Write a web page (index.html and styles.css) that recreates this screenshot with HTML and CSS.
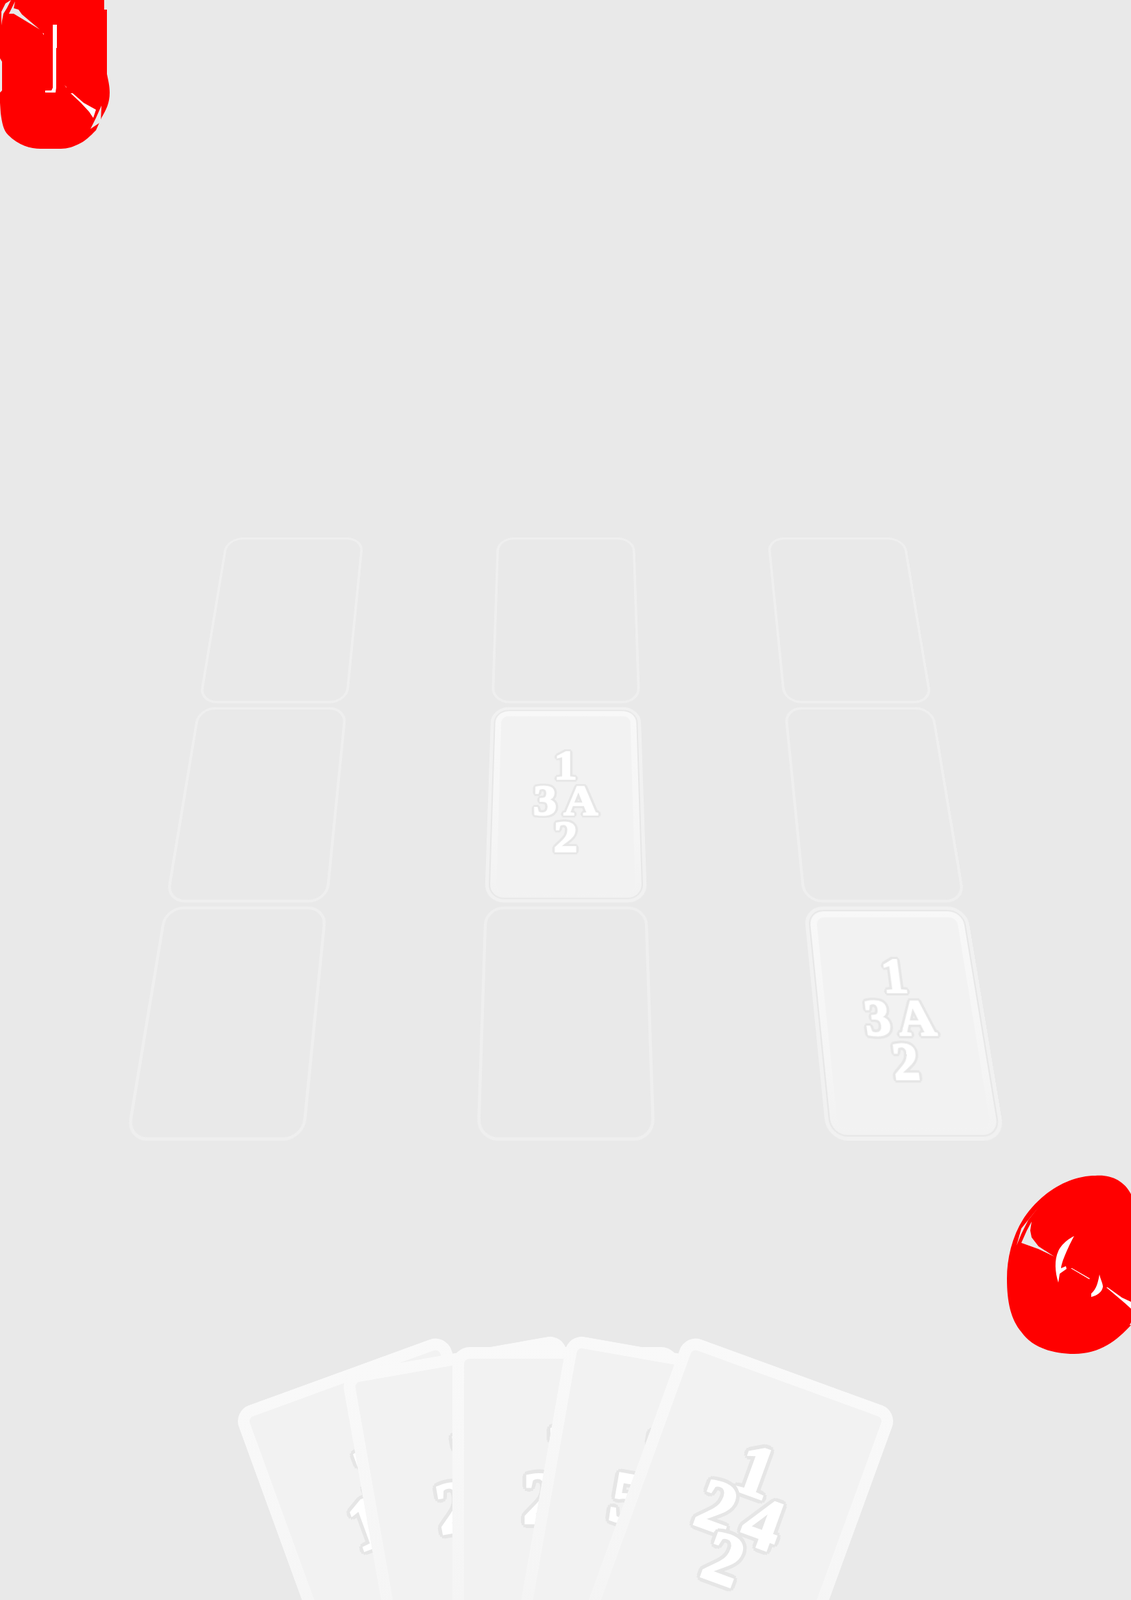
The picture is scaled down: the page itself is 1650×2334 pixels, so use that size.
FILE: index.html
```html
<!DOCTYPE html>
<html lang="en">
<head>
  <meta charset="UTF-8">
  <meta name="viewport" content="width=device-width, initial-scale=1.0">
  <title>Card Game</title>
  <link rel="stylesheet" href="styles.css">
</head>
<body>
  <div class="table">
    <!-- Player badges -->
    <svg class="badge badge-top" viewBox="0 0 160 220">
      <path class="badge-fill" d="M0 0H152V14H156V108C158 118 160 125 160 135C160 150 155 160 148 172L140 190C130 200 125 205 117 209C108 214 98 217 89 217H59C45 217 27 212 12 197C5 190 3 180 1 165L0 150V135L3 132V90L0 85Z"/>
      <path class="badge-gap" d="M2 37V17L8 5L16 0L10 12L5 20L3 30ZM13 20L22 2L20 12L27 14L32 21L58 43L30 26L20 20ZM148 154L147 178L132 188L140 172Z"/>
      <path class="badge-mark" d="M77 36H83V70H82V128L81 135H66V132H75L77 128ZM62 48L64 49L64 51ZM94 124L97 127L97 128ZM103 136H106L122 150L140 160L136 172L130 163L118 150Z"/>
    </svg>
    <svg class="badge badge-right" viewBox="1440 1690 210 300">
      <path class="badge-fill" d="M1598 1715C1620 1713 1640 1722 1650 1742V1933C1630 1955 1605 1975 1567 1975C1535 1975 1505 1965 1490 1943C1475 1925 1469 1900 1469 1865C1469 1830 1480 1790 1505 1762C1530 1733 1565 1715 1598 1715Z"/>
      <path class="badge-gap" d="M1483 1817L1490 1792L1515 1761L1500 1780L1490 1800ZM1490 1813L1498 1795L1505 1782L1503 1795L1505 1805L1515 1818L1538 1833L1515 1822ZM1648 1933L1650 1929V1933Z"/>
      <path class="badge-mark" d="M1567 1803C1555 1809 1547 1818 1544 1825C1538 1838 1539 1855 1544 1871L1546 1858L1556 1851L1555 1847L1548 1850C1549 1840 1558 1820 1567 1803ZM1604 1859C1605 1865 1609 1872 1609 1877C1608 1885 1600 1890 1592 1892V1887C1600 1880 1602 1870 1604 1859ZM1562 1850L1564 1850L1590 1865L1589 1866ZM1614 1878L1616 1878L1637 1893L1650 1899V1909L1640 1900Z"/>
    </svg>

    <!-- Board -->
    <div class="board">
      <div class="slot"></div>
      <div class="slot"></div>
      <div class="slot"></div>
      <div class="slot"></div>
      <div class="slot active">
        <div class="face">
          <div class="pips">
            <span>1</span>
            <div class="pips-row"><span>3</span><span>A</span></div>
            <span>2</span>
          </div>
        </div>
      </div>
      <div class="slot"></div>
      <div class="slot"></div>
      <div class="slot"></div>
      <div class="slot active">
        <div class="face">
          <div class="pips">
            <span>1</span>
            <div class="pips-row"><span>3</span><span>A</span></div>
            <span>2</span>
          </div>
        </div>
      </div>
    </div>

    <!-- Hand -->
    <div class="hand">
      <div class="card card-1">
        <div class="pips">
          <span>3</span>
          <div class="pips-row"><span>1</span><span>2</span></div>
          <span>4</span>
        </div>
      </div>
      <div class="card card-2">
        <div class="pips">
          <span>2</span>
          <div class="pips-row"><span>2</span><span>3</span></div>
          <span>1</span>
        </div>
      </div>
      <div class="card card-3">
        <div class="pips">
          <span>3</span>
          <div class="pips-row"><span>2</span><span>1</span></div>
          <span>2</span>
        </div>
      </div>
      <div class="card card-4">
        <div class="pips">
          <span>3</span>
          <div class="pips-row"><span>5</span><span>2</span></div>
          <span>1</span>
        </div>
      </div>
      <div class="card card-5">
        <div class="pips">
          <span>1</span>
          <div class="pips-row"><span>2</span><span>4</span></div>
          <span>2</span>
        </div>
      </div>
    </div>
  </div>
</body>
</html>
```
FILE: styles.css
```css
* {
  margin: 0;
  padding: 0;
  box-sizing: border-box;
}

body {
  background-color: #e9e9e9;
  font-family: 'Liberation Serif', serif;
  overflow: hidden;
}

.table {
  position: relative;
  width: 1650px;
  height: 2334px;
  overflow: hidden;
  padding-top: 687px;
}

/* Badges */
.badge {
  position: absolute;
  display: block;
}

.badge-top {
  top: 0;
  left: 0;
  width: 160px;
  height: 220px;
}

.badge-right {
  top: 1690px;
  left: 1440px;
  width: 210px;
  height: 300px;
}

.badge-fill {
  fill: #ff0000;
}

.badge-gap {
  fill: #e9e9e9;
}

.badge-mark {
  fill: #ffffff;
}

/* Board */
.board {
  display: grid;
  grid-template-columns: repeat(3, 227px);
  grid-template-rows: repeat(3, 316px);
  column-gap: 218.5px;
  row-gap: 6.5px;
  justify-content: center;
  transform: perspective(1625px) rotateX(25.84deg);
}

.slot {
  border: 4.5px solid #efefef;
  border-radius: 27px;
}

.slot.active {
  display: flex;
  padding: 2px;
  background-color: #e7e7e7;
  border-width: 5px;
  border-color: #f1f1f1;
}

.face {
  flex: 1;
  display: flex;
  align-items: center;
  justify-content: center;
  border: 9px solid transparent;
  border-radius: 20px;
  background: linear-gradient(#f2f2f2, #f2f2f2) padding-box, linear-gradient(#f8f8f8, #f5f5f5 70%, #f2f2f2) border-box;
}

/* Numbers on a card */
.pips {
  display: flex;
  flex-direction: column;
  align-items: center;
  font-size: 69px;
  font-weight: bold;
  line-height: 58px;
  color: #fff;
  -webkit-text-stroke: 0.03em #fff;
  text-shadow:
    0.065em 0 0 #e6e6e6, 0.056em 0.032em 0 #e6e6e6, 0.032em 0.056em 0 #e6e6e6,
    0 0.065em 0 #e6e6e6, -0.032em 0.056em 0 #e6e6e6, -0.056em 0.032em 0 #e6e6e6,
    -0.065em 0 0 #e6e6e6, -0.056em -0.032em 0 #e6e6e6, -0.032em -0.056em 0 #e6e6e6,
    0 -0.065em 0 #e6e6e6, 0.032em -0.056em 0 #e6e6e6, 0.056em -0.032em 0 #e6e6e6;
}

.pips-row {
  display: flex;
  gap: 10px;
}

/* Hand */
.hand {
  display: flex;
  justify-content: center;
  margin-top: 317px;
}

.card {
  flex: none;
  display: flex;
  align-items: center;
  justify-content: center;
  width: 330px;
  height: 462px;
  margin-left: -204.5px;
  padding-bottom: 20px;
  border: 17px solid transparent;
  border-radius: 25px;
  background: linear-gradient(#f2f2f2, #f2f2f2) padding-box, linear-gradient(#f9f9f9, #f4f4f4) border-box;
}

.card:first-child {
  margin-left: 0;
}

.card .pips {
  font-size: 107px;
  line-height: 68px;
}

.card .pips-row {
  gap: 18px;
}

.card-1 {
  transform: translateY(23px) rotate(-20deg);
}

.card-2 {
  transform: translateY(6px) rotate(-10deg);
}

.card-3 {
  transform: rotate(0deg);
}

.card-4 {
  transform: translateY(6px) rotate(10deg);
}

.card-5 {
  transform: translateY(23px) rotate(20deg);
}
```
